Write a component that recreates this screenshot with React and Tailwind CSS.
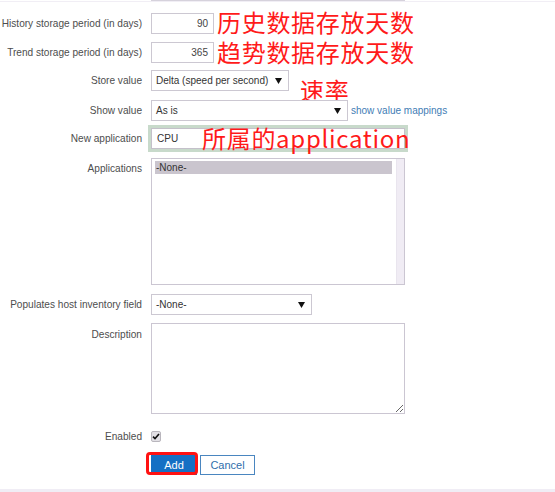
const Arrow = () => (
  <svg width="7" height="6" viewBox="0 0 7 6" className="shrink-0">
    <path d="M0 0 H7 L3.5 6 Z" fill="#111" />
  </svg>
);

const Row = ({ label, className = "", children }) => (
  <div className={"relative flex items-center " + className}>
    <div className="w-[142px] shrink-0 text-right text-[10.1px] text-[#4d4d4d]">{label}</div>
    <div className="ml-[9px] flex h-full items-center">{children}</div>
  </div>
);

const Select = ({ value, width }) => (
  <div className={"flex h-full items-center justify-between border border-[#ccc8d2] bg-white pl-[4px] pr-[6px] text-[10px] text-[#333] " + width}>
    <span>{value}</span>
    <Arrow />
  </div>
);

const Note = ({ children, className }) => (
  <span
    className={"absolute whitespace-nowrap text-[24px] leading-none tracking-[0.7px] text-[#ff1a1a] " + className}
    style={{ fontFamily: '"Noto Sans CJK SC", "Noto Sans", sans-serif' }}
  >
    {children}
  </span>
);

export default function App() {
  return (
    <div
      className="flex h-[492px] w-[555px] flex-col overflow-hidden bg-white"
      style={{ fontFamily: '"Liberation Sans", Arial, sans-serif' }}
    >
      {/* previous field, cut off */}
      <div className="flex h-[2px] border-b border-[#f1eef5]">
        <div className="ml-[151px] w-[254px] border-x border-b border-[#d6d2dc]" />
      </div>

      <Row label="History storage period (in days)" className="mt-[11px] h-[21px]">
        <div className="flex h-full w-[63px] items-center justify-end border border-[#ccc8d2] pr-[5px] text-[10px] text-[#444]">
          90
        </div>
        <Note className="left-[217px] top-[-3px]">历史数据存放天数</Note>
      </Row>

      <Row label="Trend storage period (in days)" className="mt-[8px] h-[21px]">
        <div className="flex h-full w-[63px] items-center justify-end border border-[#ccc8d2] pr-[5px] text-[10px] text-[#444]">
          365
        </div>
        <Note className="left-[217px] top-[-2px]">趋势数据存放天数</Note>
      </Row>

      <Row label="Store value" className="mt-[7px] h-[21px]">
        <Select value="Delta (speed per second)" width="w-[138px]" />
        <Note className="left-[300px] top-[8px]">速率</Note>
      </Row>

      <Row label="Show value" className="mt-[9px] h-[21px]">
        <Select value="As is" width="w-[197px]" />
        <a className="ml-[3px] text-[10px] text-[#3f7db5]">show value mappings</a>
      </Row>

      <Row label="New application" className="mt-[7px] h-[21px]">
        <div className="flex h-full w-[254px] items-center border border-[#c4c0ca] pl-[5px] text-[10px] text-[#333] ring-[3px] ring-[#c8dacb]">
          CPU
        </div>
        <Note className="left-[202px] top-[-2px]">所属的application</Note>
      </Row>

      {/* Applications list */}
      <div className="mt-[9px] flex h-[127px] items-start">
        <div className="w-[142px] shrink-0 pt-[3px] text-right text-[10.1px] text-[#4d4d4d]">Applications</div>
        <div className="ml-[9px] flex h-full w-[254px] border border-[#cbc6d2] bg-white">
          <div className="flex-1 pl-[3px] pr-[4px] pt-[2px]">
            <div className="h-[13px] bg-[#cac5ce] pl-[1px] text-[10px] leading-[13px] text-[#333]">-None-</div>
          </div>
          <div className="w-[8px] border-l border-[#e9e5ee] bg-[#f0ecf4]" />
        </div>
      </div>

      <Row label="Populates host inventory field" className="mt-[9px] h-[21px]">
        <Select value="-None-" width="w-[161px]" />
      </Row>

      {/* Description */}
      <div className="mt-[8px] flex h-[91px] items-start">
        <div className="w-[142px] shrink-0 pt-[4px] text-right text-[10.1px] text-[#4d4d4d]">Description</div>
        <textarea
          readOnly
          className="ml-[9px] h-full w-[254px] border border-[#cbc6d2] bg-white outline-none"
        />
      </div>

      <Row label="Enabled" className="mt-[17px] h-[11px]">
        <div className="flex h-[11px] w-[10px] items-center justify-center rounded-[2px] border border-[#b9b6bd] bg-[#e2e0e5]">
          <svg width="8" height="7" viewBox="0 0 8 7">
            <path d="M1 3.6 L3 5.6 L7 1" fill="none" stroke="#111" strokeWidth="1.6" />
          </svg>
        </div>
      </Row>

      {/* Buttons */}
      <div className="mt-[13px] flex h-[20px] pl-[151px]">
        <div className="relative">
          <button className="flex h-[20px] w-[46px] items-center justify-center bg-[#1570c4] p-0 text-[11px] leading-none text-white">
            Add
          </button>
          <div className="absolute left-[-5px] top-[-3px] h-[23px] w-[52px] rounded-[4px] border-[3px] border-[#ff1212]" />
        </div>
        <button className="ml-[3px] flex h-[20px] w-[55px] items-center justify-center border border-[#4a86c0] bg-white p-0 text-[11px] leading-none text-[#2f6eab]">
          Cancel
        </button>
      </div>

      <div className="mt-auto h-[3px] bg-[#f0edf5]" />
    </div>
  );
}
